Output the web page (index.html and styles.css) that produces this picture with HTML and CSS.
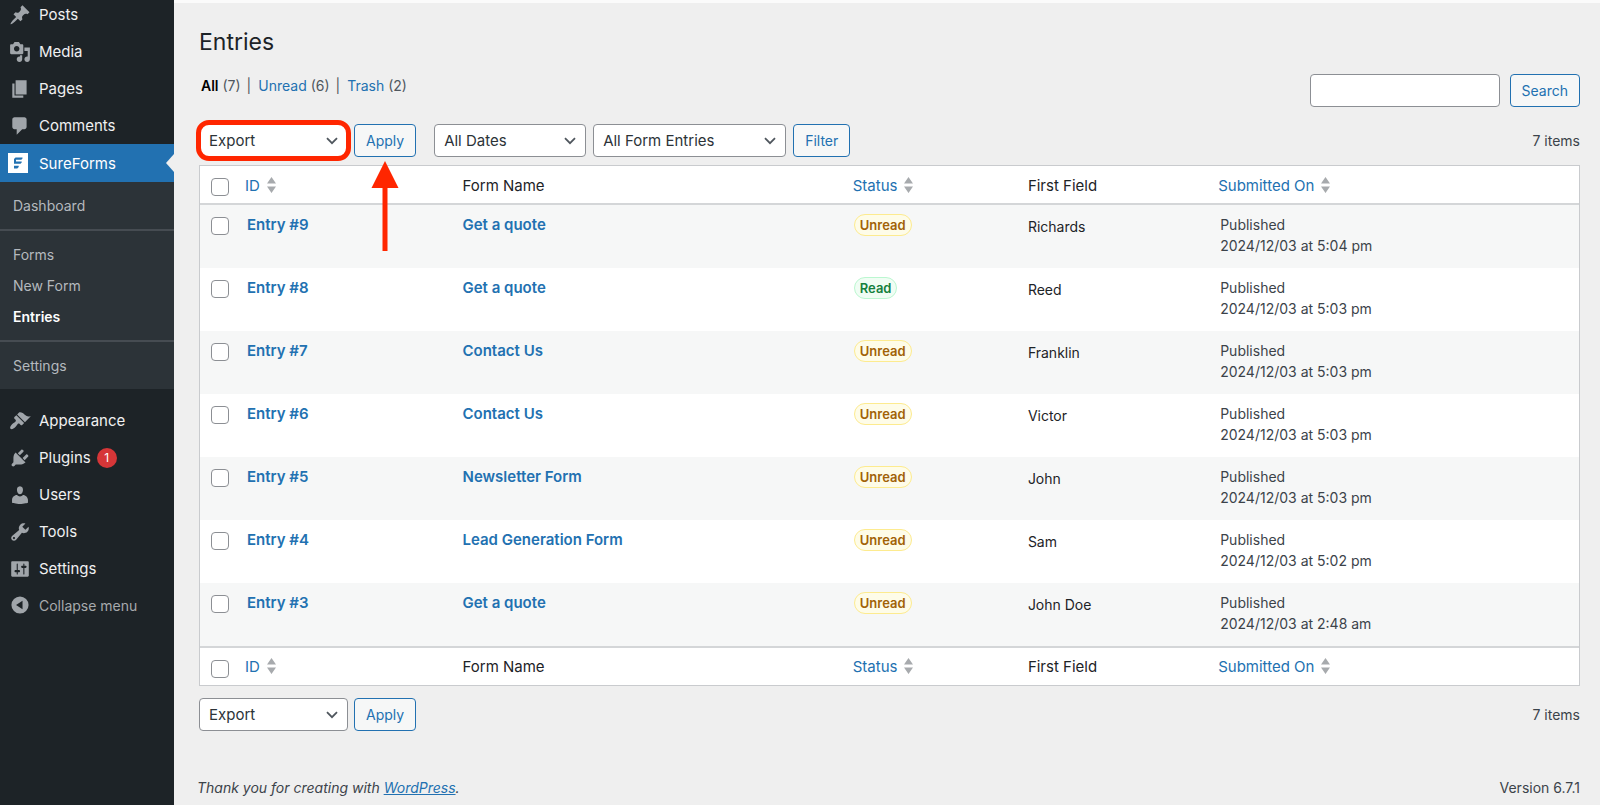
FILE: index.html
```html
<!DOCTYPE html>
<html lang="en">
<head>
<meta charset="utf-8">
<title>Entries</title>
<link rel="stylesheet" href="styles.css">
</head>
<body>
<div class="layout">
  <nav class="sidebar" aria-label="Main menu">
    <ul class="menu">
      <li><a class="menu-item" href="#"><svg class="icon" viewBox="0 0 20 20"><path d="M10.44 3.02l1.82-1.82 6.36 6.35-1.83 1.82c-1.05-.68-2.48-.57-3.41.36l-.75.75c-.92.93-1.04 2.35-.35 3.41l-1.83 1.82-2.41-2.41-2.8 2.79c-.42.42-3.38 2.71-3.8 2.29s1.86-3.39 2.28-3.81l2.79-2.79L4.1 9.36l1.83-1.82c1.05.69 2.48.57 3.4-.36l.75-.75c.93-.92 1.05-2.35.36-3.41z"/></svg>Posts</a></li>
      <li><a class="menu-item" href="#"><svg class="icon" viewBox="0 0 20 20"><path d="M13 11V4c0-.55-.45-1-1-1h-1.67L9 1H5L3.67 3H2c-.55 0-1 .45-1 1v7c0 .55.45 1 1 1h10c.55 0 1-.45 1-1zM7 4.5c1.38 0 2.5 1.12 2.5 2.5S8.38 9.5 7 9.5 4.5 8.38 4.5 7 5.62 4.5 7 4.5zM14 6h5v10.5c0 1.38-1.12 2.5-2.5 2.5S14 17.88 14 16.5s1.12-2.5 2.5-2.5c.17 0 .34.02.5.05V9h-3V6zm-4 8.05V13h2v3.5c0 1.38-1.12 2.5-2.5 2.5S7 17.88 7 16.5 8.12 14 9.5 14c.17 0 .34.02.5.05z"/></svg>Media</a></li>
      <li><a class="menu-item" href="#"><svg class="icon" viewBox="0 0 20 20"><path d="M6 15V2h10v13H6zm-1 1h8v2H3V5h2v11z"/></svg>Pages</a></li>
      <li><a class="menu-item" href="#"><svg class="icon" viewBox="0 0 20 20"><path d="M5 2h9c1.1 0 2 .9 2 2v7c0 1.1-.9 2-2 2h-2l-5 5v-5H5c-1.1 0-2-.9-2-2V4c0-1.1.9-2 2-2z"/></svg>Comments</a></li>
      <li>
        <a class="menu-item current" href="#"><svg class="icon brand" viewBox="0 0 22 22"><path fill="#fff" d="M0 1h20v20H0z"/><path fill="#2271b1" d="M7.500 5.500H14.500V6.500L13.300 7.800H8V9.600H13.700V10.500L12.500 11.800H6V7zM6 13.800h4.700v1.200L9.300 16.600H6z"/></svg>SureForms</a>
        <ul class="submenu">
          <li><a href="#">Dashboard</a></li>
          <li class="split"><a href="#">Forms</a></li>
          <li><a href="#">New Form</a></li>
          <li><a class="active" href="#">Entries</a></li>
          <li class="split"><a href="#">Settings</a></li>
        </ul>
      </li>
      <li><a class="menu-item" href="#"><svg class="icon" viewBox="0 0 20 20"><path d="M14.48 11.06L7.41 3.99l1.5-1.5c.5-.56 2.3-.47 3.51.32 1.21.8 1.43 1.28 2.91 2.1 1.18.64 2.45 1.26 4.45.85zm-.71.71L6.7 4.700 4.930 6.470c-.39.39-.39 1.02 0 1.410l1.060 1.060c.39.39.39 1.030 0 1.420-.6.6-1.430 1.110-2.210 1.690-.35.26-.7.53-1.010.84C1.430 14.230.4 16.080 1.400 17.070c.99 1 2.840-.03 4.180-1.360.31-.31.58-.66.85-1.020.57-.78 1.080-1.610 1.690-2.210.39-.39 1.020-.39 1.410 0l1.060 1.060c.39.39 1.020.39 1.410 0z"/></svg>Appearance</a></li>
      <li><a class="menu-item" href="#"><svg class="icon" viewBox="0 0 20 20"><path d="M13.11 4.36L9.87 7.6 8 5.73l3.24-3.24c.35-.34 1.05-.2 1.56.32.52.51.66 1.21.31 1.55zm-8 1.77l.91-1.12 9.01 9.01-1.19.84c-.71.71-2.63 1.16-3.82 1.16H6.14L4.9 17.26c-.59.59-1.54.59-2.12 0-.59-.58-.59-1.53 0-2.12l1.24-1.24v-3.88c0-1.13.4-3.19 1.09-3.89zm7.26 3.97l3.24-3.24c.34-.35 1.04-.21 1.55.31.52.51.66 1.21.31 1.55l-3.24 3.25z"/></svg>Plugins<span class="count">1</span></a></li>
      <li><a class="menu-item" href="#"><svg class="icon" viewBox="0 0 20 20"><path d="M10 9.250c-2.270 0-2.730-3.440-2.730-3.440C7 4.020 7.820 2 9.970 2c2.160 0 2.980 2.020 2.710 3.810 0 0-.41 3.440-2.680 3.440zM10 11.300c1.200 0 2-.5 2.720-1.300 2.390 0 4.520 2.330 4.520 4.530v2.490s-3.650 1.130-7.240 1.130c-3.650 0-7.240-1.130-7.240-1.130v-2.490c0-2.250 1.940-4.480 4.470-4.480.8.800 1.570 1.250 2.770 1.250z"/></svg>Users</a></li>
      <li><a class="menu-item" href="#"><svg class="icon" viewBox="0 0 20 20"><path d="M16.68 9.77c-1.34 1.34-3.3 1.67-4.95.99l-5.41 6.52c-.99.99-2.59.99-3.58 0s-.99-2.59 0-3.57l6.52-5.42c-.68-1.65-.35-3.61.99-4.95 1.28-1.28 3.12-1.62 4.72-1.06l-2.89 2.89 2.82 2.82 2.86-2.87c.53 1.58.18 3.39-1.08 4.65zM3.81 16.21c.4.39 1.04.39 1.43 0 .4-.4.4-1.04 0-1.43-.39-.4-1.03-.4-1.43 0-.39.39-.39 1.03 0 1.43z"/></svg>Tools</a></li>
      <li><a class="menu-item" href="#"><svg class="icon" viewBox="0 0 20 20"><path fill-rule="evenodd" d="M18 16V4c0-.55-.45-1-1-1H3c-.55 0-1 .45-1 1v12c0 .55.45 1 1 1h14c.55 0 1-.45 1-1zM8 11h1c.55 0 1 .45 1 1s-.45 1-1 1H8v1.500c0 .28-.22.5-.5.5s-.5-.22-.5-.5V13H6c-.55 0-1-.45-1-1s.45-1 1-1h1V5.500c0-.28.22-.5.5-.5s.5.22.5.5V11zm5-2h-1c-.55 0-1-.45-1-1s.45-1 1-1h1V5.500c0-.28.22-.5.5-.5s.5.22.5.5V7h1c.55 0 1 .45 1 1s-.45 1-1 1h-1v5.500c0 .28-.22.5-.5.5s-.5-.22-.5-.5V9z"/></svg>Settings</a></li>
    </ul>
    <button class="collapse" type="button"><svg class="icon" viewBox="0 0 20 20"><path fill-rule="evenodd" d="M10 2.200a7.800 7.800 0 1 1 0 15.600 7.800 7.800 0 0 1 0-15.600zM12.300 6.200v7.600L6.400 10z"/></svg>Collapse menu</button>
  </nav>

  <main class="content">
    <h1>Entries</h1>
    <div class="topline">
      <div class="views">
        <a class="all" href="#">All</a> <span>(7)</span><i>|</i><a href="#">Unread</a> <span>(6)</span><i>|</i><a href="#">Trash</a> <span>(2)</span>
      </div>
      <form class="search">
        <input type="search" aria-label="Search entries">
        <button class="btn" type="button">Search</button>
      </form>
    </div>

    <div class="toolbar">
      <span class="highlight"><select class="select bulk" aria-label="Bulk action"><option>Export</option></select></span>
      <span class="pointed">
        <button class="btn" type="button">Apply</button>
        <svg class="arrow" viewBox="0 0 28 90"><path d="M14 0l13.500 27H16.500v63h-5V27H.5z"/></svg>
      </span>
      <div class="filters">
        <select class="select dates" aria-label="Filter by date"><option>All Dates</option></select>
        <select class="select forms" aria-label="Filter by form"><option>All Form Entries</option></select>
        <button class="btn" type="button">Filter</button>
      </div>
      <span class="total">7 items</span>
    </div>

    <table class="entries">
      <colgroup><col class="c-check"><col class="c-id"><col class="c-form"><col class="c-status"><col class="c-first"><col></colgroup>
      <thead>
        <tr>
          <td><input type="checkbox" aria-label="Select all"></td>
          <th class="id" scope="col"><a href="#">ID<svg class="sort" viewBox="0 0 9 16"><path d="M4.500 0L9 6.500H0zM0 9.500h9L4.500 16z"/></svg></a></th>
          <th scope="col">Form Name</th>
          <th scope="col"><a href="#">Status<svg class="sort" viewBox="0 0 9 16"><path d="M4.500 0L9 6.500H0zM0 9.500h9L4.500 16z"/></svg></a></th>
          <th scope="col">First Field</th>
          <th scope="col"><a href="#">Submitted On<svg class="sort" viewBox="0 0 9 16"><path d="M4.500 0L9 6.500H0zM0 9.500h9L4.500 16z"/></svg></a></th>
        </tr>
      </thead>
      <tbody>
        <tr><td><input type="checkbox" aria-label="Select Entry #9"></td><td class="name"><a href="#">Entry #9</a></td><td class="form"><a href="#">Get a quote</a></td><td class="status"><span class="pill unread">Unread</span></td><td class="first">Richards</td><td class="date">Published<br>2024/12/03 at 5:04 pm</td></tr>
        <tr><td><input type="checkbox" aria-label="Select Entry #8"></td><td class="name"><a href="#">Entry #8</a></td><td class="form"><a href="#">Get a quote</a></td><td class="status"><span class="pill read">Read</span></td><td class="first">Reed</td><td class="date">Published<br>2024/12/03 at 5:03 pm</td></tr>
        <tr><td><input type="checkbox" aria-label="Select Entry #7"></td><td class="name"><a href="#">Entry #7</a></td><td class="form"><a href="#">Contact Us</a></td><td class="status"><span class="pill unread">Unread</span></td><td class="first">Franklin</td><td class="date">Published<br>2024/12/03 at 5:03 pm</td></tr>
        <tr><td><input type="checkbox" aria-label="Select Entry #6"></td><td class="name"><a href="#">Entry #6</a></td><td class="form"><a href="#">Contact Us</a></td><td class="status"><span class="pill unread">Unread</span></td><td class="first">Victor</td><td class="date">Published<br>2024/12/03 at 5:03 pm</td></tr>
        <tr><td><input type="checkbox" aria-label="Select Entry #5"></td><td class="name"><a href="#">Entry #5</a></td><td class="form"><a href="#">Newsletter Form</a></td><td class="status"><span class="pill unread">Unread</span></td><td class="first">John</td><td class="date">Published<br>2024/12/03 at 5:03 pm</td></tr>
        <tr><td><input type="checkbox" aria-label="Select Entry #4"></td><td class="name"><a href="#">Entry #4</a></td><td class="form"><a href="#">Lead Generation Form</a></td><td class="status"><span class="pill unread">Unread</span></td><td class="first">Sam</td><td class="date">Published<br>2024/12/03 at 5:02 pm</td></tr>
        <tr><td><input type="checkbox" aria-label="Select Entry #3"></td><td class="name"><a href="#">Entry #3</a></td><td class="form"><a href="#">Get a quote</a></td><td class="status"><span class="pill unread">Unread</span></td><td class="first">John Doe</td><td class="date">Published<br>2024/12/03 at 2:48 am</td></tr>
      </tbody>
      <tfoot>
        <tr>
          <td><input type="checkbox" aria-label="Select all"></td>
          <th class="id" scope="col"><a href="#">ID<svg class="sort" viewBox="0 0 9 16"><path d="M4.500 0L9 6.500H0zM0 9.500h9L4.500 16z"/></svg></a></th>
          <th scope="col">Form Name</th>
          <th scope="col"><a href="#">Status<svg class="sort" viewBox="0 0 9 16"><path d="M4.500 0L9 6.500H0zM0 9.500h9L4.500 16z"/></svg></a></th>
          <th scope="col">First Field</th>
          <th scope="col"><a href="#">Submitted On<svg class="sort" viewBox="0 0 9 16"><path d="M4.500 0L9 6.500H0zM0 9.500h9L4.500 16z"/></svg></a></th>
        </tr>
      </tfoot>
    </table>

    <div class="toolbar bottom">
      <select class="select bulk" aria-label="Bulk action"><option>Export</option></select>
      <button class="btn" type="button">Apply</button>
      <span class="total">7 items</span>
    </div>

    <footer class="footer">
      <em>Thank you for creating with <a href="#">WordPress</a>.</em>
      <span>Version 6.7.1</span>
    </footer>
  </main>
</div>
</body>
</html>
```
FILE: styles.css
```css
* { box-sizing: border-box; }
body { margin: 0; background: #efefef; color: #3c434a; font: 14px/21px Inter, "Liberation Sans", sans-serif; }
a { color: #2271b1; text-decoration: none; }
ul { list-style: none; margin: 0; padding: 0; }
input, select, button { font: inherit; margin: 0; }

.layout { display: flex; min-height: 100vh; }

/* Sidebar */
.sidebar { flex: 0 0 174px; background: #1d2327; overflow: hidden; }
.menu { margin-top: -4px; }
.menu-item { position: relative; display: flex; align-items: center; gap: 8px; height: 37px; padding-left: 9px; color: #f0f0f1; font-size: 15px; }
.icon { flex: none; width: 22px; height: 22px; fill: #a0a5aa; }
.brand { margin-left: -1px; margin-right: 1px; }
.menu-item.current { height: 38px; background: #2271b1; color: #fff; }
.current::after { content: ""; position: absolute; right: 0; top: 10px; border: 9px solid transparent; border-left-width: 0; border-right: 8px solid #efefef; }
.submenu { margin-bottom: 13px; padding: 8px 0; background: #2c3338; }
.submenu a { display: block; padding: 5px 13px; color: #b4b9be; }
.submenu .active { color: #fff; font-weight: 600; }
.submenu .split { margin-top: 8px; padding-top: 8px; border-top: 2px solid #464c52; }
.count { min-width: 20px; height: 20px; margin-left: -2px; border-radius: 10px; background: #d63638; color: #fff; font-size: 12px; line-height: 20px; text-align: center; }
.collapse { display: flex; align-items: center; gap: 8px; width: 100%; height: 36px; padding: 0 0 0 9px; border: 0; background: none; color: #a7aaad; }

/* Page */
.content { flex: 1; min-width: 0; display: flex; flex-direction: column; padding: 23px 20px 7px 25px; border-top: 3px solid #fbfbfb; }
h1 { margin: 0; color: #1d2327; font-size: 23px; font-weight: 400; line-height: 32px; }
.topline { display: flex; justify-content: space-between; margin-top: 16px; }
.views { padding: 1px 2px; color: #50575e; }
.views i { margin: 0 7px 0 6px; font-style: normal; }
.views .all { color: #000; font-weight: 600; }
.search { display: flex; gap: 10px; }
.search input { width: 190px; height: 33px; padding: 0 8px; border: 1px solid #8c8f94; border-radius: 4px; background: #fff; }
.btn { height: 33px; padding: 0 11px; border: 1px solid #2271b1; border-radius: 4px; background: #f6f7f7; color: #2271b1; }
.select { height: 33px; padding: 0 32px 0 9px; border: 1px solid #8c8f94; border-radius: 4px; appearance: none; color: #2c3338; font-size: 15px; background: #fff url("data:image/svg+xml,%3Csvg xmlns='http://www.w3.org/2000/svg' viewBox='0 0 12 8'%3E%3Cpath d='M1 1.200l5 5 5-5' fill='none' stroke='%2350575e' stroke-width='1.800'/%3E%3C/svg%3E") no-repeat right 9px center / 12px 8px; }
.bulk { width: 149px; }
.dates { width: 152px; }
.forms { width: 193px; }

.toolbar { display: flex; align-items: center; gap: 6px; margin-top: 17px; }
.highlight { position: relative; }
.highlight .select { display: block; }
.highlight::after { content: ""; position: absolute; inset: -4px -3px; border: 5px solid #ff2600; border-radius: 13px; pointer-events: none; }
.pointed { position: relative; }
.arrow { position: absolute; z-index: 1; top: 37px; left: 50%; width: 28px; height: 90px; margin-left: -14px; fill: #ff2600; }
.pointed .btn { display: block; }
.filters { display: flex; gap: 7px; margin-left: 12px; }
.total { margin-left: auto; }

/* Entries table */
.entries { width: 100%; margin-top: 8px; border: 1px solid #c9cbce; border-spacing: 0; table-layout: fixed; background: #fff; }
.c-check { width: 36px; }
.c-id { width: 15.7%; }
.c-form { width: 28.3%; }
.c-status { width: 12.7%; }
.c-first { width: 13.8%; }
td, th { padding: 9px 10px; text-align: left; vertical-align: top; }
th { height: 39px; padding-bottom: 7px; color: #1d2327; font-size: 15px; font-weight: 400; }
th.id { padding-left: 9px; }
thead td, thead th { border-bottom: 2px solid #d4d6d8; }
tfoot td, tfoot th { border-top: 2px solid #d4d6d8; }
tfoot th { padding: 8px 10px; }
tbody td { height: 63px; }
tbody tr:nth-child(odd) { background: #f6f7f7; }
.name, .form { font-size: 15px; font-weight: 600; }
.name { padding-left: 11px; }
.first { padding-top: 11px; color: #1d2327; }
.date { padding-left: 12px; }
.sort { width: 9px; height: 16px; margin-left: 7px; vertical-align: -2px; fill: #a7aaad; }
.status { padding-left: 11px; }
.pill { display: inline-block; padding: 0 5px; border: 1px solid; border-radius: 12px; font-size: 13px; font-weight: 600; line-height: 20px; }
.unread { border-color: #fdeb8f; background: #fefce8; color: #a16207; }
.read { border-color: #bbf7d0; background: #f0fdf4; color: #15803d; }
td:first-child { padding: 12px 0 0 11px; }
input[type="checkbox"] { display: block; width: 18px; height: 18px; border: 1px solid #8c8f94; border-radius: 4px; appearance: none; background: #fff; }

.bottom { margin-top: 12px; }
.footer { display: flex; justify-content: space-between; margin-top: auto; margin-left: -2px; }
.footer a { text-decoration: underline; }
```
